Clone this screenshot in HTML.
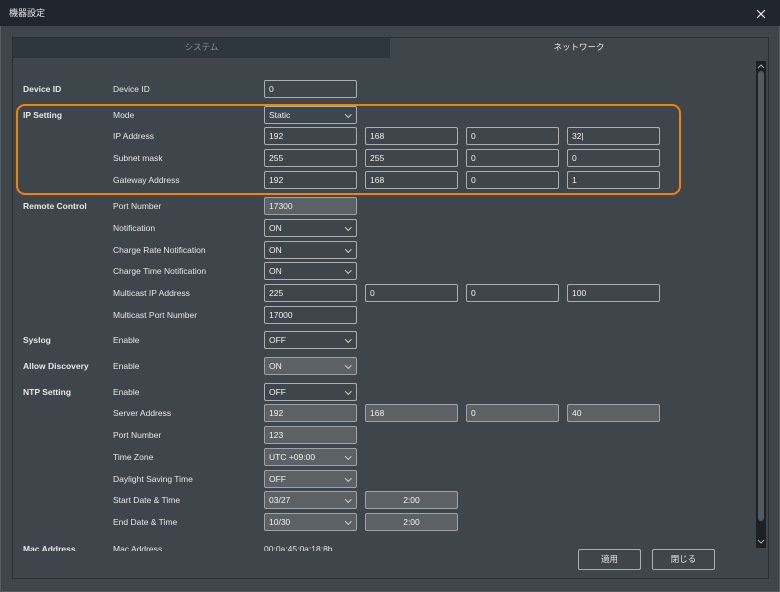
<!DOCTYPE html>
<html><head><meta charset="utf-8"><style>
*{margin:0;padding:0;box-sizing:border-box}
body{width:780px;height:592px;overflow:hidden;background:#3e454b;font-family:"Liberation Sans","Noto Sans CJK JP",sans-serif;color:#e6e8ea;position:relative}
.a{position:absolute}
.title{left:0;top:0;width:780px;height:26px;background:#1f262d}
.title span{position:absolute;left:9px;top:8px;font-size:9px;color:#e8eaec;line-height:10px}
.panel{left:12px;top:37px;width:757px;height:542px;border:1px solid #2a3136;background:#3e454b;overflow:hidden}
.frame{left:0;top:26px;width:780px;height:566px;border:1px solid #565d62;border-top:none}
.tab1{left:13px;top:38px;width:377px;height:20px;background:#2e373d;color:#8a9196;font-size:8.5px;text-align:center;line-height:19px}
.tab2{left:390px;top:38px;width:378px;height:20px;color:#e6e8ea;font-size:8.5px;text-align:center;line-height:18px}
.l1{left:23px;font-size:8.5px;font-weight:bold;line-height:10px}
.l2{left:113px;font-size:8.5px;line-height:10px}
.f{height:18px;width:93px;border:1.5px solid #a9afb3;border-radius:2px;font-size:8.5px;padding-left:4px;padding-top:2px;line-height:12px;color:#f0f2f3}
.g{background:#5c6165;border-color:#9da3a7}
.s::after{content:"";position:absolute;right:6px;top:5px;width:3.5px;height:3.5px;border-right:1px solid #ccc;border-bottom:1px solid #ccc;transform:rotate(45deg)}
.c{text-align:center;padding-left:0}
.c1{left:264px}.c2{left:365px}.c3{left:466px}.c4{left:567px}
.orange{left:16px;top:104px;width:665px;height:91px;border:2.5px solid #f58200;border-radius:9px}
.sb{left:756px;top:61px;width:10px;height:487px;background:#1c2126}
.th{left:758px;top:71px;width:6px;height:450px;background:#535c62;border-radius:3px}
.btn{top:549px;width:63px;height:21px;border:1.5px solid #a9afb3;border-radius:2px;font-size:8.5px;text-align:center;line-height:18px;background:#3e454b}
</style></head><body>
<div class="a title"><span>機器設定</span></div>
<svg class="a" style="left:756px;top:9px" width="10" height="10" viewBox="0 0 10 10"><path d="M1 1L9 9M9 1L1 9" stroke="#e8eaec" stroke-width="1.2"/></svg>
<div class="a frame"></div>
<div class="a panel"></div>
<div class="a tab1">システム</div>
<div class="a tab2">ネットワーク</div>

<div class="a l1" style="top:84px">Device ID</div><div class="a l2" style="top:84px">Device ID</div>
<div class="a f c1" style="top:80px">0</div>

<div class="a l1" style="top:110px">IP Setting</div><div class="a l2" style="top:110px">Mode</div>
<div class="a f s c1" style="top:106px">Static</div>
<div class="a l2" style="top:131px">IP Address</div>
<div class="a f c1" style="top:127px">192</div><div class="a f c2" style="top:127px">168</div><div class="a f c3" style="top:127px">0</div><div class="a f c4" style="top:127px">32|</div>
<div class="a l2" style="top:153px">Subnet mask</div>
<div class="a f c1" style="top:149px">255</div><div class="a f c2" style="top:149px">255</div><div class="a f c3" style="top:149px">0</div><div class="a f c4" style="top:149px">0</div>
<div class="a l2" style="top:175px">Gateway Address</div>
<div class="a f c1" style="top:171px">192</div><div class="a f c2" style="top:171px">168</div><div class="a f c3" style="top:171px">0</div><div class="a f c4" style="top:171px">1</div>
<div class="a orange"></div>

<div class="a l1" style="top:201px">Remote Control</div><div class="a l2" style="top:201px">Port Number</div>
<div class="a f g c1" style="top:197px">17300</div>
<div class="a l2" style="top:223px">Notification</div><div class="a f s c1" style="top:219px">ON</div>
<div class="a l2" style="top:245px">Charge Rate Notification</div><div class="a f s c1" style="top:241px">ON</div>
<div class="a l2" style="top:266px">Charge Time Notification</div><div class="a f s c1" style="top:262px">ON</div>
<div class="a l2" style="top:288px">Multicast IP Address</div>
<div class="a f c1" style="top:284px">225</div><div class="a f c2" style="top:284px">0</div><div class="a f c3" style="top:284px">0</div><div class="a f c4" style="top:284px">100</div>
<div class="a l2" style="top:310px">Multicast Port Number</div><div class="a f c1" style="top:306px">17000</div>

<div class="a l1" style="top:335px">Syslog</div><div class="a l2" style="top:335px">Enable</div><div class="a f s c1" style="top:331px">OFF</div>
<div class="a l1" style="top:361px">Allow Discovery</div><div class="a l2" style="top:361px">Enable</div><div class="a f s g c1" style="top:357px">ON</div>
<div class="a l1" style="top:387px">NTP Setting</div><div class="a l2" style="top:387px">Enable</div><div class="a f s c1" style="top:383px">OFF</div>
<div class="a l2" style="top:408px">Server Address</div>
<div class="a f g c1" style="top:404px">192</div><div class="a f g c2" style="top:404px">168</div><div class="a f g c3" style="top:404px">0</div><div class="a f g c4" style="top:404px">40</div>
<div class="a l2" style="top:430px">Port Number</div><div class="a f g c1" style="top:426px">123</div>
<div class="a l2" style="top:452px">Time Zone</div><div class="a f g s c1" style="top:448px">UTC +09:00</div>
<div class="a l2" style="top:474px">Daylight Saving Time</div><div class="a f g s c1" style="top:470px">OFF</div>
<div class="a l2" style="top:495px">Start Date &amp; Time</div><div class="a f g s c1" style="top:491px">03/27</div><div class="a f g c c2" style="top:491px">2:00</div>
<div class="a l2" style="top:517px">End Date &amp; Time</div><div class="a f g s c1" style="top:513px">10/30</div><div class="a f g c c2" style="top:513px">2:00</div>
<div class="a" style="left:13px;top:542px;width:743px;height:9px;overflow:hidden">
<div class="a l1" style="left:10px;top:2px">Mac Address</div><div class="a l2" style="left:100px;top:2px">Mac Address</div><div class="a" style="left:251px;top:2px;font-size:8.5px">00:0a:45:0a:18:8b</div>
</div>

<div class="a sb"></div><div class="a th"></div>
<svg class="a" style="left:757px;top:64px" width="8" height="5" viewBox="0 0 8 5"><path d="M1 4L4 1L7 4" stroke="#aaa" fill="none"/></svg>
<svg class="a" style="left:757px;top:539px" width="8" height="5" viewBox="0 0 8 5"><path d="M1 1L4 4L7 1" stroke="#aaa" fill="none"/></svg>
<div class="a btn" style="left:578px">適用</div>
<div class="a btn" style="left:652px">閉じる</div>
</body></html>
